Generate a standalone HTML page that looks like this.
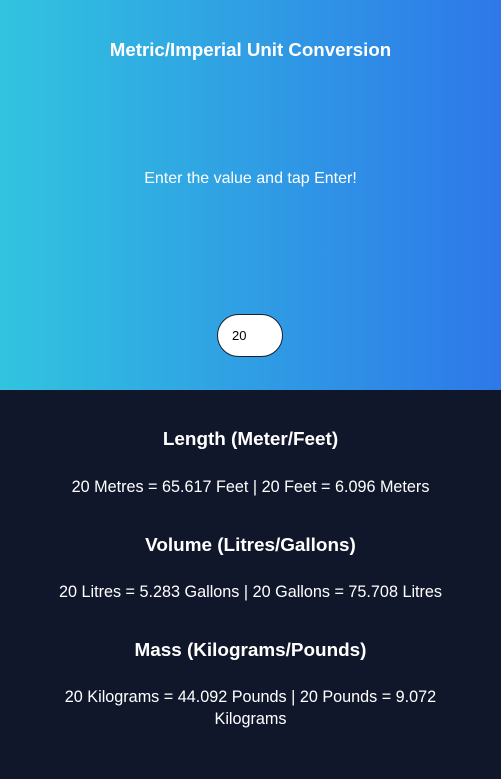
<!DOCTYPE html>
<html><head><style>
body{margin:0;width:501px;height:779px;background:#10172a;font-family:"Liberation Sans",sans-serif;color:#fff;overflow:hidden}
.top{position:relative;height:390px;background:linear-gradient(90deg,#31c4df,#2e78e9)}
.t{position:absolute;top:39px;width:100%;text-align:center;font-weight:bold;font-size:18.7px}
.s{position:absolute;top:170px;width:100%;text-align:center;font-size:16px}
.in{position:absolute;left:217px;top:314px;width:64px;height:41px;border:1px solid #1a2030;border-radius:22px;background:#fff;color:#000;font-size:13px;line-height:41px;box-sizing:content-box}
.in span{margin-left:14px}
h2{position:absolute;width:100%;text-align:center;font-size:18.9px;margin:0}
p{position:absolute;width:100%;text-align:center;font-size:16.2px;margin:0;line-height:22px}
</style></head><body>
<div class="top">
<div class="t">Metric/Imperial Unit Conversion</div>
<div class="s">Enter the value and tap Enter!</div>
<div class="in"><span>20</span></div>
</div>
<h2 style="top:429px">Length (Meter/Feet)</h2>
<p style="top:476px">20 Metres = 65.617 Feet | 20 Feet = 6.096 Meters</p>
<h2 style="top:535px">Volume (Litres/Gallons)</h2>
<p style="top:581px">20 Litres = 5.283 Gallons | 20 Gallons = 75.708 Litres</p>
<h2 style="top:640px">Mass (Kilograms/Pounds)</h2>
<p style="top:686px;left:50%;width:400px;margin-left:-200px">20 Kilograms = 44.092 Pounds | 20 Pounds = 9.072 Kilograms</p>
</body></html>
